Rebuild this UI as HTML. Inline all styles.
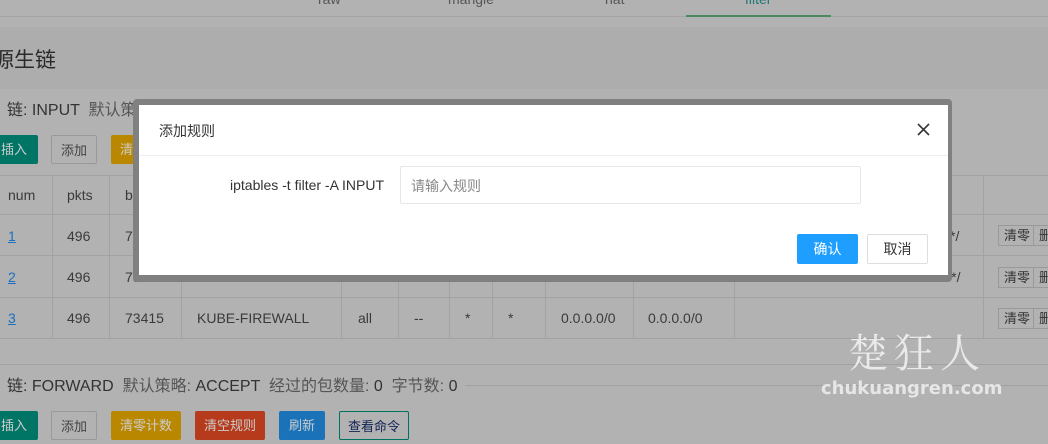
<!DOCTYPE html>
<html><head><meta charset="utf-8"><style>
*{margin:0;padding:0;box-sizing:border-box}
body{width:1048px;height:444px;overflow:hidden;background:#b2b2b2;font-family:"Liberation Sans","Noto Sans CJK SC",sans-serif;position:relative;color:#333}
.a{position:absolute;white-space:nowrap}
.hl{position:absolute;height:1px;background:#a2a2a2}
.vl{position:absolute;width:1px;background:#a2a2a2}
.btn{position:absolute;height:29px;line-height:29px;text-align:center;font-size:13px;border-radius:2px}
.td{position:absolute;font-size:14px;color:#3a3a3a;white-space:nowrap}
.sb{position:absolute;height:21px;line-height:19px;font-size:13px;border:1px solid #999;color:#333;padding:0 5px;white-space:nowrap;overflow:hidden}
</style></head><body>
<div class="a" style="left:318px;top:-9px;font-size:14px;color:#555">raw</div>
<div class="a" style="left:448px;top:-9px;font-size:14px;color:#555">mangle</div>
<div class="a" style="left:605px;top:-9px;font-size:14px;color:#555">nat</div>
<div class="a" style="left:745px;top:-9px;font-size:14px;color:#277">filter</div>
<div class="hl" style="left:0;top:16px;width:1048px;background:#a5a5a5"></div>
<div class="a" style="left:686px;top:15px;width:145px;height:2px;background:#4a8a5e"></div>
<div class="a" style="left:0;top:27px;width:1048px;height:62px;background:#adadad"></div>
<div class="a" style="left:-7px;top:44px;font-size:21px;color:#2a2a2a">源生链</div>
<div class="a" style="left:7px;top:96px;font-size:16px;color:#333">链: INPUT &nbsp;<span style="color:#555">默认策略: ACCEPT &nbsp;经过的包数量: 496 &nbsp;字节数: 73415</span></div>
<div class="btn" style="left:-10px;top:135px;width:48px;background:#007566;color:#ccc">插入</div>
<div class="btn" style="left:51px;top:135px;width:46px;border:1px solid #999;color:#444">添加</div>
<div class="btn" style="left:111px;top:135px;width:70px;background:#b98800;color:#ccc">清零计数</div>
<div class="hl" style="left:0;top:175px;width:1048px"></div>
<div class="hl" style="left:0;top:214px;width:1048px"></div>
<div class="hl" style="left:0;top:255px;width:1048px"></div>
<div class="hl" style="left:0;top:297px;width:1048px"></div>
<div class="hl" style="left:0;top:338px;width:1048px"></div>
<div class="vl" style="left:52px;top:175px;height:164px"></div>
<div class="vl" style="left:109px;top:175px;height:164px"></div>
<div class="vl" style="left:181px;top:175px;height:164px"></div>
<div class="vl" style="left:341px;top:175px;height:164px"></div>
<div class="vl" style="left:398px;top:175px;height:164px"></div>
<div class="vl" style="left:449px;top:175px;height:164px"></div>
<div class="vl" style="left:492px;top:175px;height:164px"></div>
<div class="vl" style="left:545px;top:175px;height:164px"></div>
<div class="vl" style="left:633px;top:175px;height:164px"></div>
<div class="vl" style="left:734px;top:175px;height:164px"></div>
<div class="vl" style="left:983px;top:175px;height:164px"></div>
<div class="td" style="left:8px;top:187px">num</div>
<div class="td" style="left:67px;top:187px">pkts</div>
<div class="td" style="left:125px;top:187px">bytes</div>
<div class="td" style="left:8px;top:228px;color:#1a6fc0;text-decoration:underline">1</div>
<div class="td" style="left:67px;top:228px">496</div>
<div class="td" style="left:125px;top:228px">73415</div>
<div class="td" style="left:8px;top:269px;color:#1a6fc0;text-decoration:underline">2</div>
<div class="td" style="left:67px;top:269px">496</div>
<div class="td" style="left:125px;top:269px">73415</div>
<div class="td" style="left:197px;top:269px">KUBE-NODE-PORT</div>
<div class="td" style="left:358px;top:269px">all</div>
<div class="td" style="left:414px;top:269px">--</div>
<div class="td" style="left:561px;top:269px">0.0.0.0/0</div>
<div class="td" style="left:648px;top:269px">0.0.0.0/0</div>
<div class="td" style="left:748px;top:269px">/* kubernetes health check rules */</div>
<div class="td" style="left:950px;top:228px">*/</div>
<div class="td" style="left:8px;top:310px;color:#1a6fc0;text-decoration:underline">3</div>
<div class="td" style="left:67px;top:310px">496</div>
<div class="td" style="left:125px;top:310px">73415</div>
<div class="td" style="left:197px;top:310px">KUBE-FIREWALL</div>
<div class="td" style="left:358px;top:310px">all</div>
<div class="td" style="left:414px;top:310px">--</div>
<div class="td" style="left:465px;top:310px">*</div>
<div class="td" style="left:508px;top:310px">*</div>
<div class="td" style="left:561px;top:310px">0.0.0.0/0</div>
<div class="td" style="left:648px;top:310px">0.0.0.0/0</div>
<div class="sb" style="left:998px;top:225px;width:36px">清零</div><div class="sb" style="left:1033px;top:225px;width:30px">删除</div>
<div class="sb" style="left:998px;top:267px;width:36px">清零</div><div class="sb" style="left:1033px;top:267px;width:30px">删除</div>
<div class="sb" style="left:998px;top:308px;width:36px">清零</div><div class="sb" style="left:1033px;top:308px;width:30px">删除</div>
<div class="hl" style="left:0;top:364px;width:1048px"></div>
<div class="hl" style="left:465px;top:385px;width:583px"></div>
<div class="a" style="left:7px;top:372px;font-size:16px;color:#333">链: FORWARD &nbsp;<span style="color:#555">默认策略: </span>ACCEPT &nbsp;<span style="color:#555">经过的包数量: </span>0 &nbsp;<span style="color:#555">字节数: </span>0</div>
<div class="btn" style="left:-10px;top:411px;width:48px;background:#007566;color:#ccc">插入</div>
<div class="btn" style="left:51px;top:411px;width:46px;border:1px solid #999;color:#444">添加</div>
<div class="btn" style="left:111px;top:411px;width:70px;background:#b98800;color:#ccc">清零计数</div>
<div class="btn" style="left:195px;top:411px;width:70px;background:#b53b1c;color:#ccc">清空规则</div>
<div class="btn" style="left:279px;top:411px;width:46px;background:#1a73b8;color:#ccc">刷新</div>
<div class="btn" style="left:339px;top:411px;width:70px;border:1px solid #00705f;color:#125">查看命令</div>
<div class="a" style="left:848px;top:322px;font-size:40px;color:#eaeaea;font-family:'Noto Serif CJK SC',serif;letter-spacing:6px">楚狂人</div>
<div class="a" style="left:821px;top:378px;font-size:18px;font-weight:bold;color:#e6e6e6;font-family:'DejaVu Sans',sans-serif">chukuangren.com</div>
<div class="a" style="left:133px;top:99px;width:819px;height:183px;background:#808080;border-radius:4px"></div>
<div class="a" style="left:139px;top:105px;width:809px;height:170px;background:#fff"></div>
<div class="a" style="left:159px;top:121px;font-size:14px;color:#333">添加规则</div>
<svg class="a" style="left:917px;top:123px" width="13" height="13" viewBox="0 0 13 13"><path d="M1 1L12 12M12 1L1 12" stroke="#333" stroke-width="1.6"/></svg>
<div class="a" style="left:139px;top:155px;width:809px;height:1px;background:#eee"></div>
<div class="a" style="left:230px;top:177px;font-size:14px;color:#333">iptables -t filter -A INPUT</div>
<div class="a" style="left:400px;top:166px;width:461px;height:38px;border:1px solid #e6e6e6;border-radius:2px"></div>
<div class="a" style="left:411px;top:176px;font-size:14px;color:#888">请输入规则</div>
<div class="btn" style="left:797px;top:234px;width:61px;height:30px;line-height:30px;background:#1e9fff;color:#fff;font-size:14px">确认</div>
<div class="btn" style="left:867px;top:234px;width:61px;height:30px;line-height:28px;border:1px solid #dedede;color:#333;font-size:14px">取消</div>
</body></html>
